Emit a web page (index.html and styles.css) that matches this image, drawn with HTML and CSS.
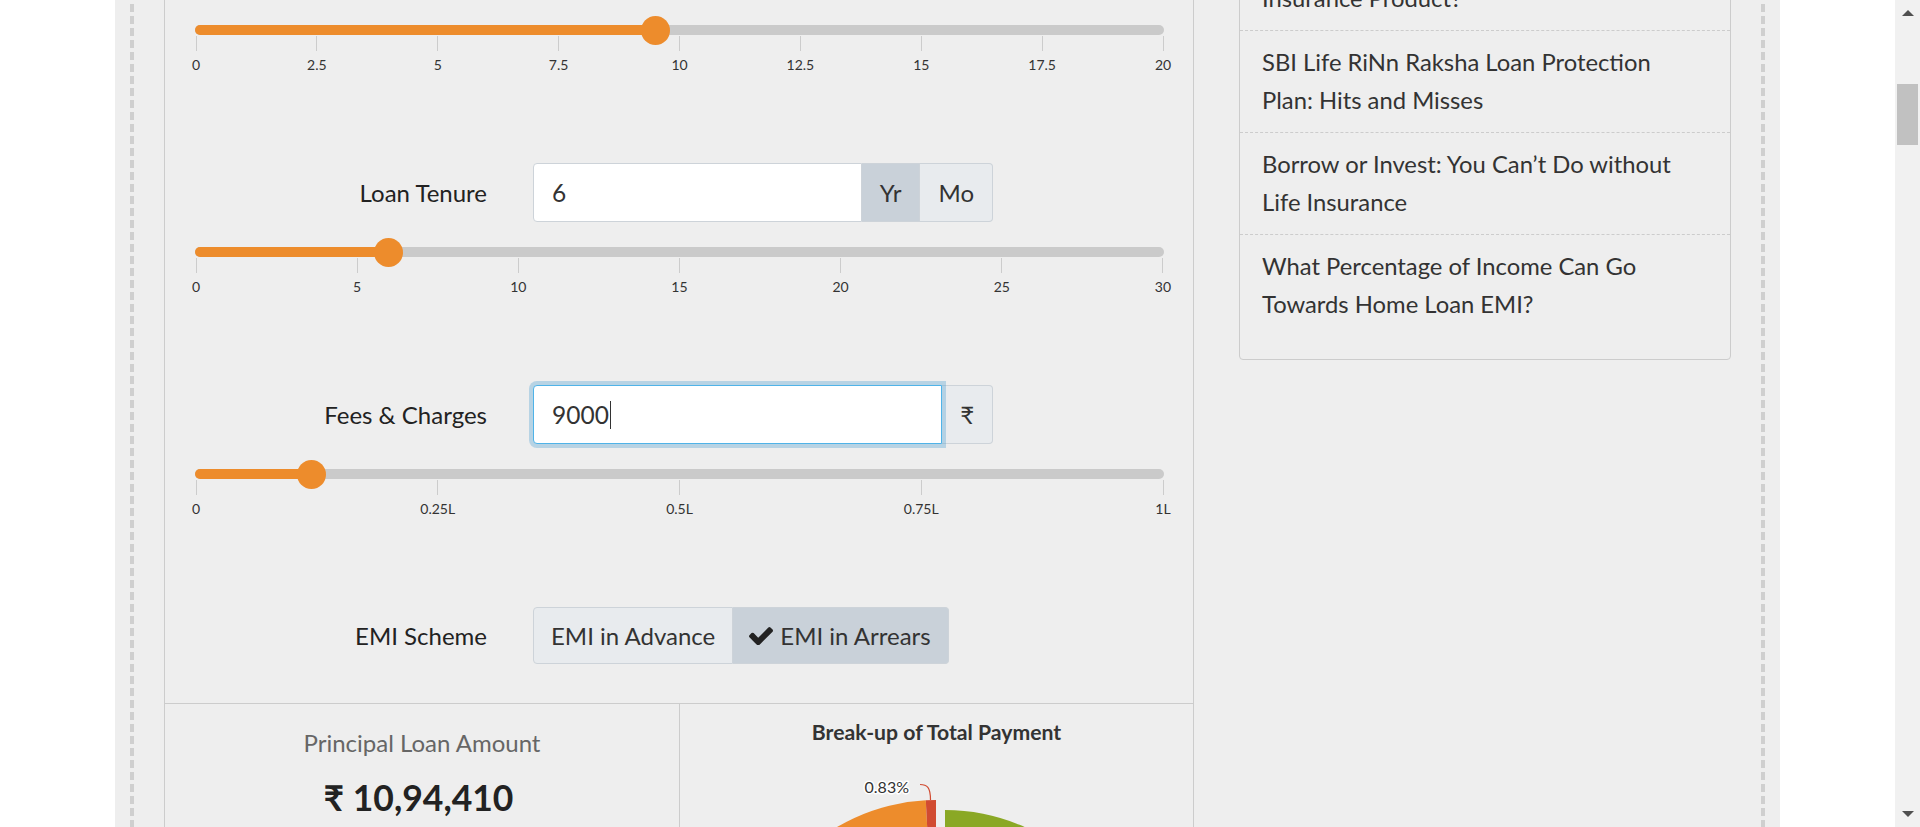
FILE: index.html
```html
<!DOCTYPE html>
<html lang="en">
<head>
<meta charset="utf-8">
<title>EMI Calculator</title>
<link rel="stylesheet" href="styles.css">
</head>
<body>
<div class="viewport">
  <div class="page">
    <div class="container">
      <div class="frame">
        <div class="content">
          <section class="calc">
            <div class="calc-form">
              <div class="group">
                <div class="field-row">
                  <div class="field-label">Interest Rate</div>
                  <div class="input-group">
                    <div class="input">9.5</div>
                    <div class="addon">%</div>
                  </div>
                </div>
                <div class="slider">
                  <div class="track">
                    <div class="fill" style="width:47.5%"></div>
                    <div class="thumb" style="left:47.5%"></div>
                  </div>
                  <div class="ticks">
                    <div class="tick"><span class="tick-line"></span><span class="tick-label">0</span></div>
                    <div class="tick"><span class="tick-line"></span><span class="tick-label">2.5</span></div>
                    <div class="tick"><span class="tick-line"></span><span class="tick-label">5</span></div>
                    <div class="tick"><span class="tick-line"></span><span class="tick-label">7.5</span></div>
                    <div class="tick"><span class="tick-line"></span><span class="tick-label">10</span></div>
                    <div class="tick"><span class="tick-line"></span><span class="tick-label">12.5</span></div>
                    <div class="tick"><span class="tick-line"></span><span class="tick-label">15</span></div>
                    <div class="tick"><span class="tick-line"></span><span class="tick-label">17.5</span></div>
                    <div class="tick"><span class="tick-line"></span><span class="tick-label">20</span></div>
                  </div>
                </div>
              </div>

              <div class="group">
                <div class="field-row">
                  <div class="field-label">Loan Tenure</div>
                  <div class="input-group">
                    <div class="input">6</div>
                    <div class="addon active">Yr</div>
                    <div class="addon">Mo</div>
                  </div>
                </div>
                <div class="slider">
                  <div class="track">
                    <div class="fill" style="width:20%"></div>
                    <div class="thumb" style="left:20%"></div>
                  </div>
                  <div class="ticks">
                    <div class="tick"><span class="tick-line"></span><span class="tick-label">0</span></div>
                    <div class="tick"><span class="tick-line"></span><span class="tick-label">5</span></div>
                    <div class="tick"><span class="tick-line"></span><span class="tick-label">10</span></div>
                    <div class="tick"><span class="tick-line"></span><span class="tick-label">15</span></div>
                    <div class="tick"><span class="tick-line"></span><span class="tick-label">20</span></div>
                    <div class="tick"><span class="tick-line"></span><span class="tick-label">25</span></div>
                    <div class="tick"><span class="tick-line"></span><span class="tick-label">30</span></div>
                  </div>
                </div>
              </div>

              <div class="group">
                <div class="field-row">
                  <div class="field-label">Fees &amp; Charges</div>
                  <div class="input-group">
                    <div class="input focused">9000<span class="caret"></span></div>
                    <div class="addon">₹</div>
                  </div>
                </div>
                <div class="slider">
                  <div class="track">
                    <div class="fill" style="width:12%"></div>
                    <div class="thumb" style="left:12%"></div>
                  </div>
                  <div class="ticks">
                    <div class="tick"><span class="tick-line"></span><span class="tick-label">0</span></div>
                    <div class="tick"><span class="tick-line"></span><span class="tick-label">0.25L</span></div>
                    <div class="tick"><span class="tick-line"></span><span class="tick-label">0.5L</span></div>
                    <div class="tick"><span class="tick-line"></span><span class="tick-label">0.75L</span></div>
                    <div class="tick"><span class="tick-line"></span><span class="tick-label">1L</span></div>
                  </div>
                </div>
              </div>

              <div class="group">
                <div class="field-row scheme-row">
                  <div class="field-label">EMI Scheme</div>
                  <div class="btn-group">
                    <div class="btn">EMI in Advance</div>
                    <div class="btn active"><svg class="check" viewBox="121 430 1550 960" aria-hidden="true"><path d="M1671 566q0 40-28 68l-724 724-136 136q-28 28-68 28t-68-28l-136-136-362-362q-28-28-28-68t28-68l136-136q28-28 68-28t68 28l294 295 656-657q28-28 68-28t68 28l136 136q28 28 28 68z"/></svg>EMI in Arrears</div>
                  </div>
                </div>
              </div>
            </div>

            <div class="results">
              <div class="summary">
                <div class="summary-label">Principal Loan Amount</div>
                <div class="summary-value">₹ 10,94,410</div>
              </div>
              <div class="chart">
                <div class="chart-title">Break-up of Total Payment</div>
                <svg class="pie" width="512" height="320" viewBox="0 0 512 320" aria-hidden="true">
                  <path d="M256 250 L256 55 A195 195 0 1 1 61 250 Z" fill="#8aa825" transform="translate(9 10)"/>
                  <path d="M256 250 L61 250 A195 195 0 0 1 245.79 55.27 Z" fill="#ed8c2c"/>
                  <path d="M256 250 L245.79 55.27 A195 195 0 0 1 256 55 Z" fill="#d14b31"/>
                  <path d="M240 39.5 C247 39.5 250.5 42 250.5 55" fill="none" stroke="#d14b31" stroke-width="1.2"/>
                  <text x="229" y="48" text-anchor="end" class="pie-label">0.83%</text>
                </svg>
              </div>
            </div>
          </section>

          <aside class="sidebar">
            <div class="post">Is Loan Protection Plan a Good<br>Insurance Product?</div>
            <div class="post">SBI Life RiNn Raksha Loan Protection Plan: Hits and Misses</div>
            <div class="post">Borrow or Invest: You Can’t Do without Life Insurance</div>
            <div class="post">What Percentage of Income Can Go Towards Home Loan EMI?</div>
          </aside>
        </div>
      </div>
    </div>
  </div>
  <div class="scrollbar">
    <span class="sb-up"></span>
    <span class="sb-thumb"></span>
    <span class="sb-down"></span>
  </div>
</div>
</body>
</html>
```

FILE: styles.css
```css
* { box-sizing: border-box; }

html, body {
  margin: 0;
  height: 100%;
  overflow: hidden;
}

body {
  font-family: Lato, "Open Sans", "Liberation Sans", sans-serif;
  color: #333;
  background: #fff;
}

.viewport {
  display: flex;
  height: 827px;
}

.page {
  flex: 1;
  min-width: 0;
  height: 100%;
  overflow: hidden;
}

.container {
  width: 1665px;
  height: 100%;
  margin: 0 auto;
  padding: 0 15px;
  background: #eeeeee;
}

.frame {
  display: flow-root;
  height: 100%;
  padding: 0 34px;
  background-image:
    repeating-linear-gradient(to bottom, transparent 0 4px, #cfcfcf 4px 12px),
    repeating-linear-gradient(to bottom, transparent 0 4px, #cfcfcf 4px 12px);
  background-position: left top, right top;
  background-size: 4px 100%;
  background-repeat: no-repeat;
}

.content {
  display: flex;
  align-items: flex-start;
  gap: 45px;
  margin-top: -90px;
}

/* ---------- calculator panel ---------- */
.calc {
  width: 1030px;
  flex: none;
  border: 1px solid #cccccc;
}

.calc-form {
  padding: 30px 30px 39px 31px;
}

.group + .group { margin-top: 88px; }

.field-row {
  display: grid;
  grid-template-columns: 291px 460px;
  column-gap: 46px;
  align-items: center;
  height: 59px;
}

.scheme-row { height: 57px; }

.field-label {
  text-align: right;
  font-size: 24px;
  color: #222;
}

.input-group {
  display: flex;
  height: 59px;
}

.input {
  flex: 1;
  display: flex;
  align-items: center;
  padding: 0 18px;
  background: #fff;
  border: 1px solid #cdd3d9;
  border-radius: 4px 0 0 4px;
  font-size: 24.5px;
  color: #333;
}

.input.focused {
  position: relative;
  z-index: 1;
  border-color: #4fb3e8;
  box-shadow: 0 0 0 4px rgba(80, 160, 210, 0.35);
}

.caret {
  display: inline-block;
  width: 1px;
  height: 28px;
  margin-left: 1px;
  background: #333;
}

.addon {
  display: flex;
  align-items: center;
  padding: 0 18px;
  background: #e8ebee;
  border: 1px solid #cdd3d9;
  border-left: 0;
  font-size: 24px;
  color: #333;
}

.addon:last-child { border-radius: 0 4px 4px 0; }
.addon.active { background: #c9d1d9; }

/* ---------- sliders ---------- */
.slider { margin-top: 25px; }

.track {
  position: relative;
  height: 10px;
  margin: 0 -1px;
  border-radius: 5px;
  background: #cacaca;
}

.fill {
  position: absolute;
  left: 0;
  top: 0;
  bottom: 0;
  border-radius: 5px;
  background: #ed8c2c;
}

.thumb {
  position: absolute;
  top: 50%;
  width: 29px;
  height: 29px;
  margin: -14.5px 0 0 -14.5px;
  border-radius: 50%;
  background: #ed8c2c;
}

.ticks {
  display: flex;
  justify-content: space-between;
  margin-top: 1px;
}

.tick {
  width: 0;
  display: flex;
  flex-direction: column;
  align-items: center;
}

.tick-line {
  width: 1px;
  height: 15px;
  background: #cccccc;
}

.tick-label {
  margin-top: 4px;
  font-size: 14px;
  line-height: 20px;
  white-space: nowrap;
  color: #333;
}

/* ---------- EMI scheme buttons ---------- */
.btn-group {
  display: flex;
  justify-self: start;
  height: 57px;
}

.btn {
  display: flex;
  align-items: center;
  padding: 0 17px;
  background: #e8ebee;
  border: 1px solid #cdd3d9;
  font-size: 24px;
  color: #333;
}

.btn:first-child { border-radius: 4px 0 0 4px; }
.btn:last-child { border-left: 0; border-radius: 0 4px 4px 0; padding: 0 17px 0 16px; }
.btn.active { background: #c9d1d9; }

.check {
  width: 24px;
  height: 18px;
  margin-right: 7px;
  fill: #222;
}

/* ---------- results ---------- */
.results {
  display: grid;
  grid-template-columns: 515px 1fr;
  border-top: 1px solid #cccccc;
}

.summary {
  border-right: 1px solid #cccccc;
  text-align: center;
  padding-top: 23px;
  height: 360px;
}

.summary-label {
  font-size: 24px;
  line-height: 31px;
  color: #666;
}

.summary-value {
  margin-top: 18px;
  padding-right: 7px;
  font-size: 35.5px;
  line-height: 44px;
  font-weight: 700;
  color: #222;
}

.chart {
  padding-top: 15px;
  text-align: center;
}

.chart-title {
  font-size: 21.2px;
  line-height: 26px;
  font-weight: 700;
  color: #333;
}

.pie { display: block; }

.pie-label {
  font-family: Lato, "Open Sans", sans-serif;
  font-size: 16px;
  fill: #333;
  stroke: #fff;
  stroke-width: 3px;
  paint-order: stroke;
  stroke-linejoin: round;
}

/* ---------- sidebar ---------- */
.sidebar {
  width: 492px;
  flex: none;
  padding: 18px 0 23px;
  border: 1px solid #cccccc;
  border-radius: 4px;
}

.post {
  padding: 12px 34px 13px 22px;
  border-bottom: 1px dashed #cccccc;
  font-size: 23.8px;
  line-height: 38px;
  color: #333;
}

.post:last-child { border-bottom: 0; }

/* ---------- fake scrollbar ---------- */
.scrollbar {
  width: 25px;
  flex: none;
  display: flex;
  flex-direction: column;
  align-items: center;
  background: #f1f1f1;
}

.sb-up {
  width: 0;
  height: 0;
  margin-top: 10px;
  border-left: 6px solid transparent;
  border-right: 6px solid transparent;
  border-bottom: 6px solid #505050;
}

.sb-thumb {
  width: 21px;
  height: 61px;
  margin-top: 68px;
  background: #c1c1c1;
}

.sb-down {
  width: 0;
  height: 0;
  margin-top: auto;
  margin-bottom: 10px;
  border-left: 6px solid transparent;
  border-right: 6px solid transparent;
  border-top: 6px solid #505050;
}
```
